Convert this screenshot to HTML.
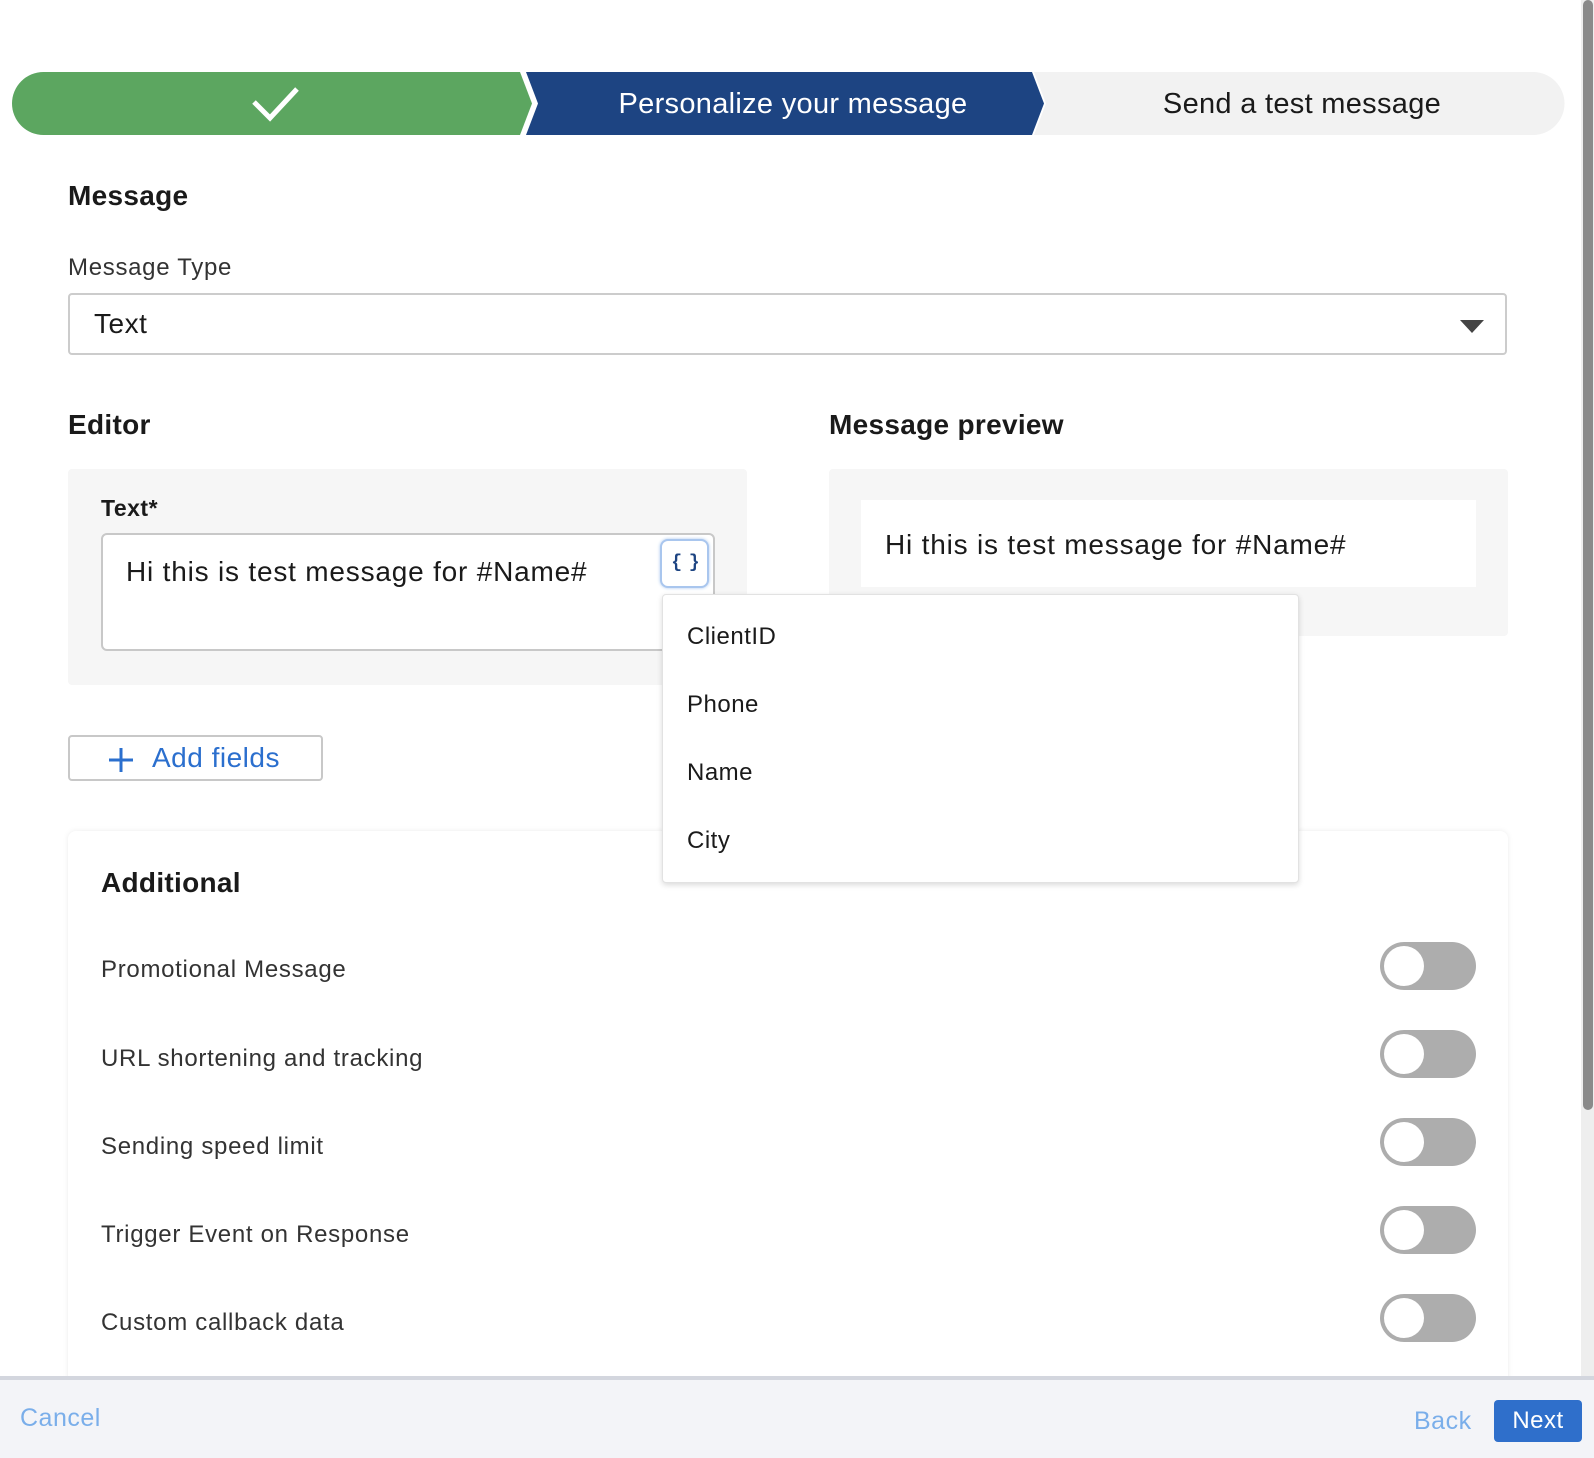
<!DOCTYPE html><html><head><style>
*{box-sizing:border-box;margin:0;padding:0}
body{width:1594px;height:1458px;overflow:hidden;background:#fff;font-family:"Liberation Sans",Arial,sans-serif;color:#1a1a1a;position:relative;letter-spacing:0.5px}
.a{position:absolute}
.h{font-weight:bold;font-size:28px;color:#1a1a1a;letter-spacing:0.3px}
.lbl{font-size:24px;color:#333;letter-spacing:0.7px}
.tog{position:absolute;left:1380px;width:96px;height:48px;border-radius:24px;background:#adadad}
.tog::after{content:"";position:absolute;left:4px;top:4px;width:40px;height:40px;border-radius:50%;background:#fff}
.item{position:absolute;left:24px;font-size:24px;color:#1a1a1a}
</style></head><body>
<svg class="a" style="left:12px;top:72px" width="1553" height="63">
<path d="M1022 0 H1521 A31.5 31.5 0 0 1 1521 63 H1022 L1034 31.5 Z" fill="#f2f2f2"/>
<path d="M514 0 H1020 L1032 31.5 L1020 63 H514 L526 31.5 Z" fill="#1d4482"/>
<path d="M31.5 0 H508 L520 31.5 L508 63 H31.5 A31.5 31.5 0 0 1 31.5 0 Z" fill="#5ca660"/>
<path d="M242 30 L258 46 L285 17" stroke="#fff" stroke-width="5" fill="none"/>
<text x="781" y="41" font-size="29" fill="#fff" text-anchor="middle" font-family="Liberation Sans" letter-spacing="0.3">Personalize your message</text>
<text x="1290" y="41" font-size="29" fill="#1a1a1a" text-anchor="middle" font-family="Liberation Sans" letter-spacing="0.3">Send a test message</text>
</svg>
<div class="a" style="left:1581px;top:0;width:13px;height:1378px;background:#eee"></div>
<div class="a" style="left:1583px;top:0;width:10px;height:1110px;background:#8a8a8a;border-radius:5px"></div>
<div class="a h" style="left:68px;top:180px">Message</div>
<div class="a lbl" style="left:68px;top:254px">Message Type</div>
<div class="a" style="left:68px;top:293px;width:1439px;height:62px;border:2px solid #ccc;border-radius:4px"></div>
<div class="a" style="left:94px;top:308px;font-size:28px">Text</div>
<div class="a" style="left:1460px;top:320px;width:0;height:0;border-left:12px solid transparent;border-right:12px solid transparent;border-top:13px solid #444"></div>
<div class="a h" style="left:68px;top:409px">Editor</div>
<div class="a h" style="left:829px;top:409px">Message preview</div>
<div class="a" style="left:68px;top:469px;width:679px;height:216px;background:#f6f6f6;border-radius:4px"></div>
<div class="a" style="left:101px;top:495px;font-size:23px;font-weight:bold">Text*</div>
<div class="a" style="left:101px;top:533px;width:614px;height:118px;background:#fff;border:2px solid #c8c8c8;border-radius:6px"></div>
<div class="a" style="left:126px;top:556px;font-size:28px;letter-spacing:0.8px">Hi this is test message for #Name#</div>
<div class="a" style="left:660px;top:539px;width:49px;height:49px;background:#fff;border:2px solid #a9c6ee;border-radius:8px;box-shadow:0 0 3px #a9c6ee;text-align:center;line-height:44px;font-size:18px;font-weight:bold;color:#1d4482;letter-spacing:-2px;font-family:'Liberation Mono',monospace">{ }</div>
<div class="a" style="left:829px;top:469px;width:679px;height:167px;background:#f6f6f6;border-radius:4px"></div>
<div class="a" style="left:861px;top:500px;width:615px;height:87px;background:#fff"></div>
<div class="a" style="left:885px;top:529px;font-size:28px;letter-spacing:0.8px">Hi this is test message for #Name#</div>
<div class="a" style="left:68px;top:735px;width:255px;height:46px;border:2px solid #c8c8c8;border-radius:4px;color:#2b6fce;font-size:28px;line-height:42px;padding-left:38px">
<svg class="a" style="left:38px;top:10px" width="26" height="26"><path d="M13 1V25M1 13H25" stroke="#2b6fce" stroke-width="3"/></svg><span style="margin-left:44px">Add fields</span></div>
<div class="a" style="left:68px;top:831px;width:1440px;height:560px;background:#fff;border-radius:8px;box-shadow:0 0 6px rgba(0,0,0,0.08)"></div>
<div class="a h" style="left:101px;top:867px">Additional</div>
<div class="a lbl" style="left:101px;top:956px">Promotional Message</div>
<div class="a lbl" style="left:101px;top:1045px">URL shortening and tracking</div>
<div class="a lbl" style="left:101px;top:1133px">Sending speed limit</div>
<div class="a lbl" style="left:101px;top:1221px">Trigger Event on Response</div>
<div class="a lbl" style="left:101px;top:1309px">Custom callback data</div>
<div class="tog" style="top:942px"></div><div class="tog" style="top:1030px"></div><div class="tog" style="top:1118px"></div><div class="tog" style="top:1206px"></div><div class="tog" style="top:1294px"></div>
<div class="a" style="left:662px;top:594px;width:637px;height:289px;background:#fff;border:1px solid #e2e2e2;border-radius:4px;box-shadow:0 2px 6px rgba(0,0,0,0.15)">
<div class="item" style="top:28px">ClientID</div><div class="item" style="top:96px">Phone</div><div class="item" style="top:164px">Name</div><div class="item" style="top:232px">City</div></div>
<div class="a" style="left:0;top:1376px;width:1594px;height:82px;background:#f3f4f8;border-top:4px solid #d3d6de"></div>
<div class="a" style="left:20px;top:1404px;font-size:25px;color:#7aaeea">Cancel</div>
<div class="a" style="left:1414px;top:1407px;font-size:25px;color:#7aaeea">Back</div>
<div class="a" style="left:1494px;top:1400px;width:88px;height:42px;background:#2f6fcb;border-radius:4px;color:#fff;font-size:24px;text-align:center;line-height:42px">Next</div>
</body></html>
